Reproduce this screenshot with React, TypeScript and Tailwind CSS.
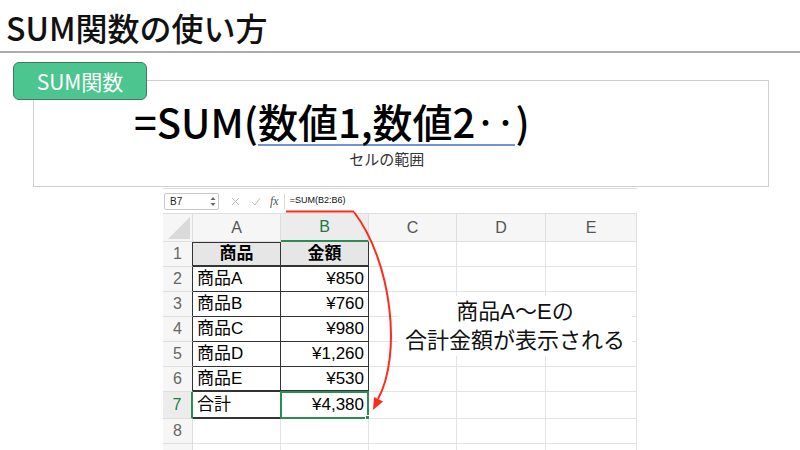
const jp = "font-['Noto_Sans_CJK_JP','Noto_Sans',sans-serif]";
const mix = "font-['Liberation_Sans','Noto_Sans_CJK_JP',sans-serif]";

const rows: { label: string; amount: string }[] = [
  { label: '商品', amount: '金額' },
  { label: '商品A', amount: '¥850' },
  { label: '商品B', amount: '¥760' },
  { label: '商品C', amount: '¥980' },
  { label: '商品D', amount: '¥1,260' },
  { label: '商品E', amount: '¥530' },
  { label: '合計', amount: '¥4,380' },
];

const rowHeights = ['h-[25px]', 'h-[25px]', 'h-[25px]', 'h-[25px]', 'h-[25px]', 'h-[25px]', 'h-[27px]', 'h-[25px]', 'h-[25px]'];

function FormulaBar() {
  return (
    <div className="h-[25px] border-t border-[#dcdcdc] bg-white flex items-center">
      <div className="ml-px w-[55px] h-[17px] border border-[#c8c8c8] rounded-[2px] flex items-center justify-between pl-[5px] pr-[2px]">
        <span className="text-[10px] text-[#222] font-['Liberation_Sans',sans-serif]">B7</span>
        <svg width="6" height="11" viewBox="0 0 6 11">
          <path d="M0.5 4 L3 1 L5.5 4 Z" fill="#666" />
          <path d="M0.5 7 L3 10 L5.5 7 Z" fill="#666" />
        </svg>
      </div>
      <svg className="ml-[12px]" width="9" height="9" viewBox="0 0 9 9">
        <path d="M1 1 L8 8 M8 1 L1 8" stroke="#bdbdbd" strokeWidth="1" />
      </svg>
      <svg className="ml-[11px]" width="10" height="9" viewBox="0 0 10 9">
        <path d="M1 5 L4 8 L9 1" stroke="#bdbdbd" strokeWidth="1" fill="none" />
      </svg>
      <span className="ml-[9px] text-[12px] italic text-[#555] font-['Liberation_Serif',serif]">fx</span>
      <div className="ml-[5px] w-px h-[15px] bg-[#d8d8d8]" />
      <span className="ml-[5px] text-[9px] text-[#111] font-['Liberation_Sans',sans-serif]">=SUM(B2:B6)</span>
    </div>
  );
}

function Sheet() {
  const cols = ['A', 'B', 'C', 'D', 'E'];
  return (
    <div className={`ml-[163px] mt-px w-[474px] ${mix}`}>
      <FormulaBar />
      <div className="grid grid-cols-[30px_88px_88px_88px_89px_91px]">
        {/* header row */}
        <div className="h-[29px] bg-[#f6f6f6] border-t border-r border-b border-[#dedede] relative">
          <svg className="absolute right-[2px] bottom-[2px]" width="22" height="22" viewBox="0 0 22 22">
            <path d="M22 0 L22 22 L0 22 Z" fill="#dadada" />
          </svg>
        </div>
        {cols.map((c) => (
          <div
            key={c}
            className={`h-[29px] border-t border-r flex items-center justify-center text-[16px] ${
              c === 'B'
                ? 'bg-[#ececec] text-[#1f7a47] border-[#dedede] border-b-2 border-b-[#2e8b57]'
                : 'bg-[#f6f6f6] text-[#555] border-b border-[#dedede]'
            }`}
          >
            {c}
          </div>
        ))}
        {rowHeights.map((h, i) => {
          const r = rows[i];
          const num = i + 1;
          const isTotal = num === 7;
          const thickBottom = num === 1 || num === 6 || num === 7;
          const inTable = !!r;
          return [
            <div
              key={`h${num}`}
              className={`${h} border-b flex items-center justify-center text-[16px] ${
                isTotal
                  ? 'bg-[#ececec] text-[#1f7a47] border-[#dedede] border-r-2 border-r-[#2e8b57]'
                  : inTable
                  ? 'bg-[#f6f6f6] text-[#666] border-[#dedede] border-r border-r-[#333]'
                  : 'bg-[#f6f6f6] text-[#666] border-r border-[#dedede]'
              }`}
            >
              {num < 9 ? num : ''}
            </div>,
            <div
              key={`a${num}`}
              className={`${h} flex items-center ${
                inTable
                  ? `border-r border-[#333] ${thickBottom ? 'border-b-2' : 'border-b'} ${num === 1 ? 'border-t border-t-[#333] bg-[#e6e6e6] justify-center font-bold' : 'pl-[4px]'}`
                  : 'border-r border-b border-[#e3e3e3]'
              } text-[17px] text-black`}
            >
              {r?.label}
            </div>,
            <div
              key={`b${num}`}
              className={`${h} flex items-center relative ${
                inTable
                  ? `border-r border-[#333] ${thickBottom ? 'border-b-2' : 'border-b'} ${num === 1 ? 'bg-[#e6e6e6] justify-center font-bold' : 'justify-end pr-[4px]'}`
                  : 'border-r border-b border-[#e3e3e3]'
              } text-[17px] text-black`}
            >
              {isTotal && (
                <div className="absolute -left-px -top-px -right-px -bottom-[2px] border-2 border-[#2e8b57]">
                  <div className="absolute -right-[3px] -bottom-[3px] w-[5px] h-[5px] bg-[#2e8b57] border border-white" />
                </div>
              )}
              <span className="relative">{r?.amount}</span>
            </div>,
            ...['c', 'd', 'e'].map((k) => (
              <div key={`${k}${num}`} className={`${h} border-r border-b border-[#e3e3e3]`} />
            )),
          ];
        })}
      </div>
    </div>
  );
}

export default function App() {
  return (
    <div className={`relative w-[800px] h-[450px] overflow-hidden bg-white ${jp}`}>
      <h1 className="pt-[8px] pl-[6px] h-[51px] text-[32px] leading-[38px] font-medium text-[#111]">SUM関数の使い方</h1>
      <div className="h-[2px] bg-[#ababab]" />

      <div className="mt-[27px] ml-[33px] w-[736px] h-[107px] border border-[#cfcfcf] relative">
        <div className="absolute -top-[19px] -left-[21px] w-[134px] h-[38px] rounded-[6px] bg-[#4dc58f] border border-[#3c7a66] flex items-center justify-center text-white text-[21px] leading-none">
          SUM関数
        </div>
        <div className="pl-[100px] pt-[17px] flex items-start text-[40px] leading-[46px] font-medium text-black">
          <span>=SUM(</span>
          <span className="flex flex-col items-center">
            <span className="border-b-2 border-[#6f93d6] leading-[46px]">数値1,数値2‥</span>
            <span className="mt-[3px] text-[15px] leading-[20px] font-normal text-[#333]">セルの範囲</span>
          </span>
          <span>)</span>
        </div>
      </div>

      <Sheet />

      <div className={`absolute left-[398px] top-[296px] w-[234px] h-[60px] bg-white flex flex-col items-center justify-center text-[22px] leading-[29px] text-[#111] ${mix}`}>
        <span>商品A〜Eの</span>
        <span>合計金額が表示される</span>
      </div>

      <svg className="absolute inset-0 pointer-events-none" width="800" height="450" viewBox="0 0 800 450">
        <path d="M286 211.5 L354 211.5" stroke="#ff2a1a" strokeWidth="2" />
        <path d="M354 212 C 392 262, 402 355, 378 399" stroke="#ff2a1a" strokeWidth="2" fill="none" />
        <path d="M373 410 L383 401.5 L374 397 Z" fill="#ff2a1a" />
      </svg>
    </div>
  );
}
